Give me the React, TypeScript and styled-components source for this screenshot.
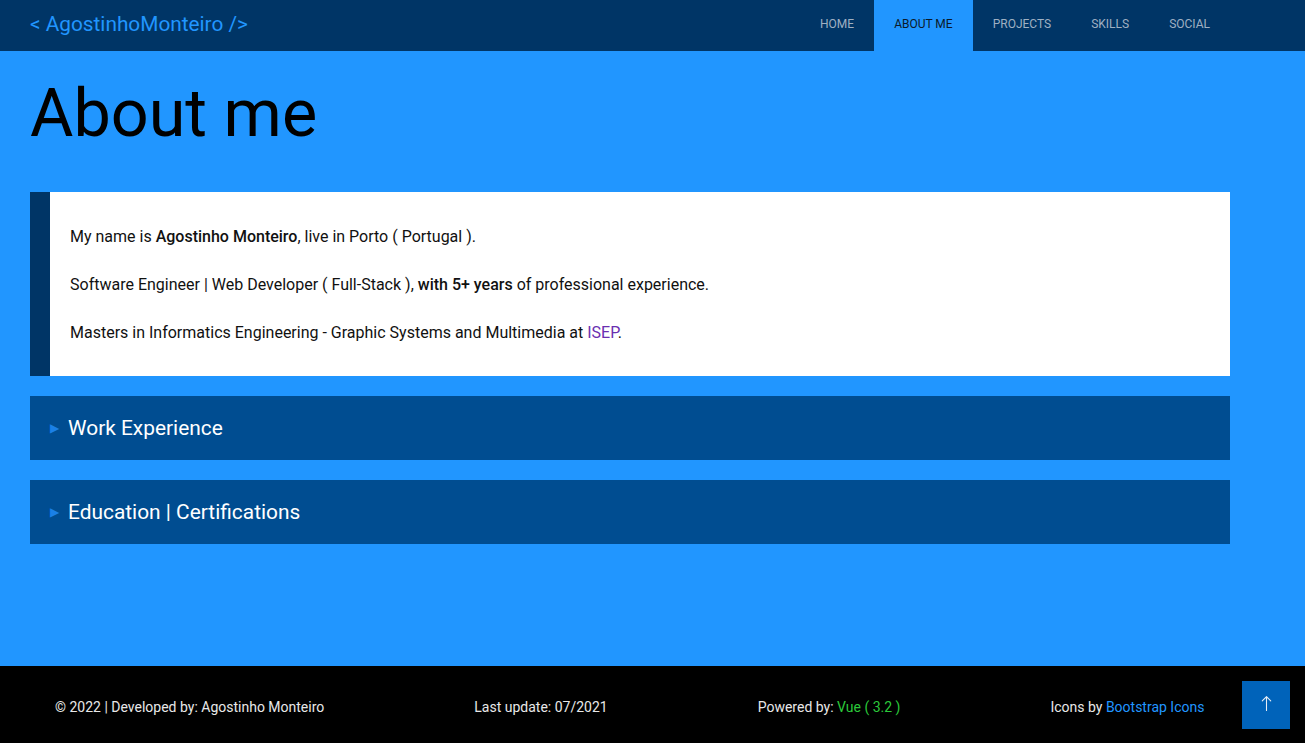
import React from "react";
import styled, { createGlobalStyle } from "styled-components";

const GlobalStyle = createGlobalStyle`
  html, body { margin: 0; padding: 0; }
  body {
    font-family: Roboto, "Liberation Sans", Arial, sans-serif;
    background: #2196ff;
  }
  * { box-sizing: border-box; }
`;

const Page = styled.div`
  min-height: 100vh;
  display: flex;
  flex-direction: column;
`;

const NavBar = styled.header`
  height: 51px;
  background: #003566;
  display: flex;
  align-items: stretch;
  justify-content: space-between;
  padding: 0 75px 0 30px;
`;

const Logo = styled.a`
  display: flex;
  align-items: center;
  padding-bottom: 4px;
  color: #2196ff;
  font-size: 20.8px;
  text-decoration: none;
`;

const NavList = styled.nav`
  display: flex;
  align-items: stretch;
`;

const NavItem = styled.a<{ $active?: boolean }>`
  display: flex;
  align-items: center;
  padding: 0 20px 4px;
  font-size: 12px;
  text-transform: uppercase;
  text-decoration: none;
  color: ${(p) => (p.$active ? "#0b1a2a" : "#9fb0c2")};
  background: ${(p) => (p.$active ? "#2196ff" : "transparent")};
`;

const Main = styled.main`
  flex: 1;
  padding: 0 75px 40px 30px;
`;

const Title = styled.h1`
  margin: 24px 0 40px;
  font-size: 66.5px;
  font-weight: 400;
  color: #000;
  line-height: 77px;
`;

const Card = styled.section`
  background: #fff;
  border-left: 20px solid #003566;
  padding: 33px 20px 31px;
  display: flex;
  flex-direction: column;
  gap: 24px;
  margin-bottom: 20px;
`;

const Para = styled.p`
  margin: 0;
  font-size: 16px;
  line-height: 24px;
  color: #111;

  b {
    font-weight: 500;
  }
`;

const Link = styled.a`
  color: #6a2fb0;
  text-decoration: none;
`;

const Accordion = styled.div`
  height: 64px;
  background: #004d91;
  display: flex;
  align-items: center;
  padding: 0 20px;
  margin-bottom: 20px;
  color: #fff;
  font-size: 20.9px;
  font-weight: 400;
`;

const Arrow = styled.span`
  color: #1a80e6;
  font-size: 12px;
  margin-right: 9px;
  line-height: 1;
`;

const Footer = styled.footer`
  height: 77px;
  background: #000;
  display: flex;
  align-items: center;
  padding: 4px 0 0 55px;
  gap: 150px;
  color: #e8e8e8;
  font-size: 14px;
`;

const Accent = styled.span<{ $color: string }>`
  color: ${(p) => p.$color};
`;

const UpButton = styled.button`
  position: fixed;
  right: 15px;
  bottom: 14px;
  width: 48px;
  height: 48px;
  border: none;
  background: #0063ba;
  display: flex;
  align-items: center;
  justify-content: center;
  padding: 0 0 4px;
  cursor: pointer;
`;

export default function App() {
  return (
    <Page>
      <GlobalStyle />
      <NavBar>
        <Logo href="#">&lt; AgostinhoMonteiro /&gt;</Logo>
        <NavList>
          <NavItem href="#">Home</NavItem>
          <NavItem href="#" $active>About me</NavItem>
          <NavItem href="#">Projects</NavItem>
          <NavItem href="#">Skills</NavItem>
          <NavItem href="#">Social</NavItem>
        </NavList>
      </NavBar>
      <Main>
        <Title>About me</Title>
        <Card>
          <Para>
            My name is <b>Agostinho Monteiro</b>, live in Porto ( Portugal ).
          </Para>
          <Para>
            Software Engineer | Web Developer ( Full-Stack ), <b>with 5+ years</b> of professional experience.
          </Para>
          <Para>
            Masters in Informatics Engineering - Graphic Systems and Multimedia at <Link href="#">ISEP</Link>.
          </Para>
        </Card>
        <Accordion>
          <Arrow>▶</Arrow>Work Experience
        </Accordion>
        <Accordion>
          <Arrow>▶</Arrow>Education | Certifications
        </Accordion>
      </Main>
      <Footer>
        <span>© 2022 | Developed by: Agostinho Monteiro</span>
        <span>Last update: 07/2021</span>
        <span>
          Powered by: <Accent $color="#2bc93a">Vue ( 3.2 )</Accent>
        </span>
        <span>
          Icons by <Accent $color="#2196ff">Bootstrap Icons</Accent>
        </span>
      </Footer>
      <UpButton aria-label="Back to top">
        <svg width="17" height="17" viewBox="0 0 16 16" fill="#e8eef5">
          <path
            fillRule="evenodd"
            d="M8 15a.5.5 0 0 0 .5-.5V2.707l3.146 3.147a.5.5 0 0 0 .708-.708l-4-4a.5.5 0 0 0-.708 0l-4 4a.5.5 0 1 0 .708.708L7.5 2.707V14.5a.5.5 0 0 0 .5.5z"
          />
        </svg>
      </UpButton>
    </Page>
  );
}
